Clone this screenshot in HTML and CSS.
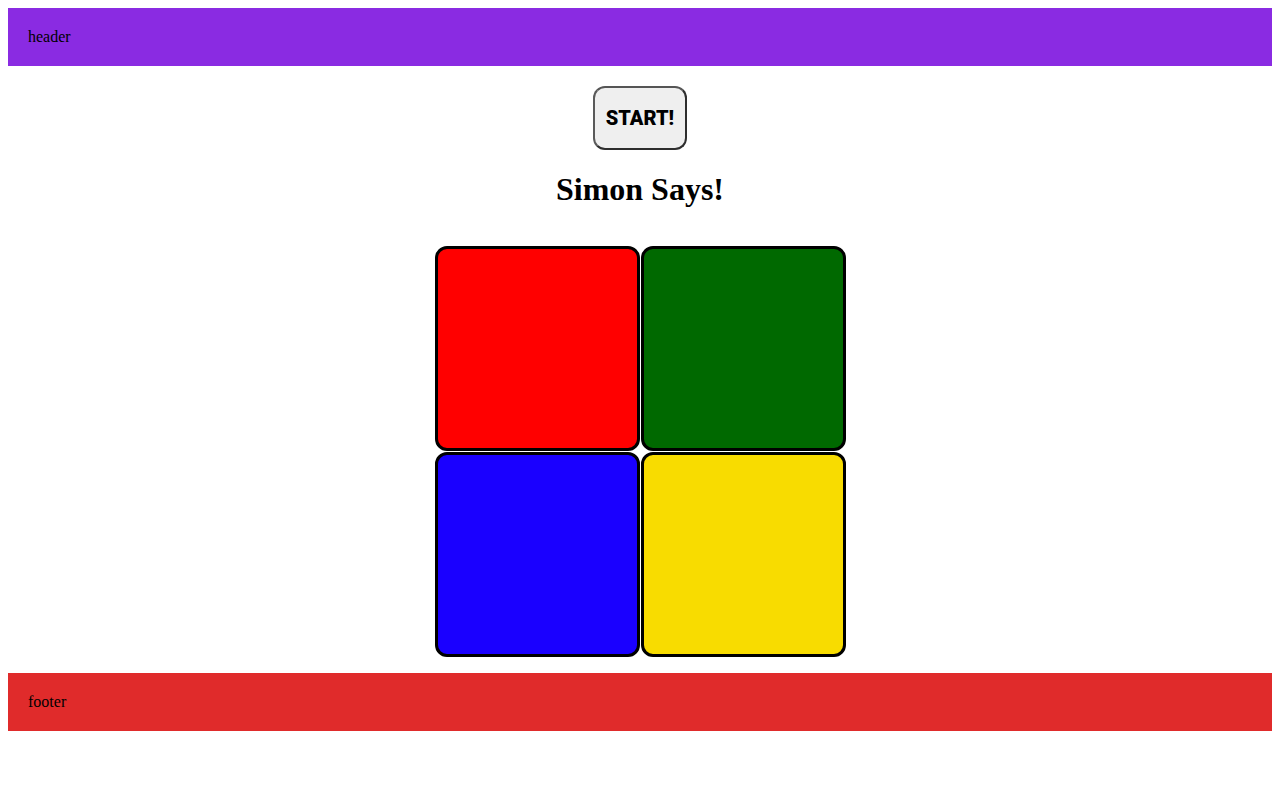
FILE: index.html
```html
<!DOCTYPE html>
<html>
<head>
<meta charset="utf-8">
<link rel="stylesheet" href="styles.css">
</head>
<body>
<header class="site-header">header</header>
<main class="game">
  <button class="start-btn">START!</button>
  <h1 class="title">Simon Says!</h1>
  <div class="board">
    <div class="tile tile-red"></div>
    <div class="tile tile-green"></div>
    <div class="tile tile-blue"></div>
    <div class="tile tile-yellow"></div>
  </div>
</main>
<footer class="site-footer">footer</footer>
</body>
</html>
```
FILE: styles.css
```css
body {
  margin: 8px;
  font-family: "Liberation Serif", "Times New Roman", serif;
  font-size: 16px;
  color: #000;
  background: #fff;
}
.site-header {
  background: #8a2be2;
  padding: 20px;
  line-height: 18px;
}
.site-footer {
  background: #e02b2b;
  padding: 20px;
  line-height: 18px;
}
.game {
  display: flex;
  flex-direction: column;
  align-items: center;
  padding-top: 20px;
}
.start-btn {
  font-family: Roboto, "Liberation Sans", sans-serif;
  font-weight: 900;
  font-size: 20px;
  height: 64px;
  width: 94px;
  padding: 0;
  background: #efefef;
  color: #000;
  border: 2px solid #2e2e2e;
  border-left-color: #5a5a5a;
  border-top-color: #555;
  border-radius: 12px;
}
.title {
  font-size: 32px;
  font-weight: bold;
  margin: 21px 0;
  line-height: 37px;
}
.board {
  display: grid;
  grid-template-columns: repeat(2, 205px);
  grid-auto-rows: 205px;
  gap: 1px;
  margin: 17px 0 16px;
}
.tile {
  border: 3px solid #000;
  border-radius: 12px;
}
.tile-red { background: #ff0000; }
.tile-green { background: #006900; }
.tile-blue { background: #1a00ff; }
.tile-yellow { background: #f8dc00; }
```
